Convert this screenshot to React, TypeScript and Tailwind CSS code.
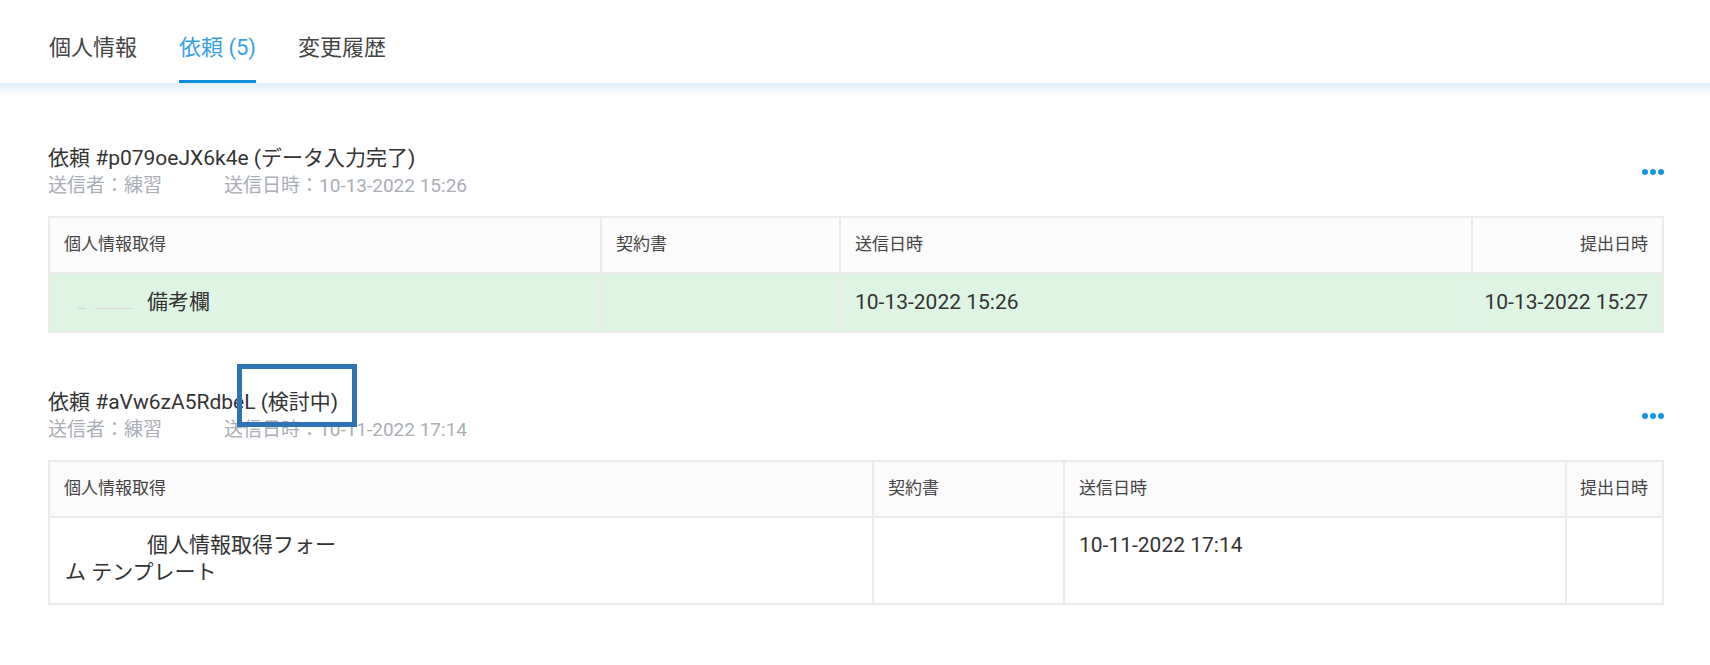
import React from "react";

type Row = {
  title: string;
  sender: string;
  sentAt: string;
  cols: string;
  rowH: string;
  rowBg: string;
  rowAlign: string;
  form: React.ReactNode;
  sent: string;
  submitted: string;
};

const font = "font-['Roboto','Noto_Sans_CJK_JP',sans-serif]";

function Dots() {
  return (
    <div className="flex gap-[2px]">
      <span className="h-[6px] w-[6px] rounded-full bg-[#1296e0]" />
      <span className="h-[6px] w-[6px] rounded-full bg-[#1296e0]" />
      <span className="h-[6px] w-[6px] rounded-full bg-[#1296e0]" />
    </div>
  );
}

function RequestBlock({ r, className }: { r: Row; className?: string }) {
  return (
    <div className={className}>
      <div className="flex items-center justify-between">
        <div className="leading-[27px]">
          <div className="text-[21px] text-[#333]">{r.title}</div>
          <div className="flex text-[19px] text-[#a9aeb6]">
            <span>送信者：{r.sender}</span>
            <span className="ml-[62px]">送信日時：{r.sentAt}</span>
          </div>
        </div>
        <Dots />
      </div>

      {/* table */}
      <div className={`mt-[17px] grid gap-[2px] bg-[#ebebeb] p-[2px] ${r.cols}`}>
        <div className="flex h-[54px] items-center bg-[#fbfbfb] pl-[14px] text-[17px] text-[#444]">個人情報取得</div>
        <div className="flex h-[54px] items-center bg-[#fbfbfb] pl-[14px] text-[17px] text-[#444]">契約書</div>
        <div className="flex h-[54px] items-center bg-[#fbfbfb] pl-[14px] text-[17px] text-[#444]">送信日時</div>
        <div className="flex h-[54px] items-center justify-end bg-[#fbfbfb] pr-[14px] text-[17px] text-[#444]">提出日時</div>

        <div className={`flex pl-[15px] text-[21px] leading-[27px] text-[#333] ${r.rowH} ${r.rowBg} ${r.rowAlign}`}>{r.form}</div>
        <div className={`${r.rowH} ${r.rowBg}`} />
        <div className={`flex pl-[14px] text-[21px] leading-[27px] text-[#333] ${r.rowH} ${r.rowBg} ${r.rowAlign}`}>{r.sent}</div>
        <div className={`flex justify-end pr-[14px] text-[21px] leading-[27px] text-[#333] ${r.rowH} ${r.rowBg} ${r.rowAlign}`}>{r.submitted}</div>
      </div>
    </div>
  );
}

const rows: Row[] = [
  {
    title: "依頼 #p079oeJX6k4e (データ入力完了)",
    sender: "練習",
    sentAt: "10-13-2022 15:26",
    cols: "grid-cols-[550px_237px_630px_1fr]",
    rowH: "h-[57px]",
    rowBg: "bg-[#dff5e3]",
    rowAlign: "items-center",
    form: (
      <div>
        <span className="inline-flex w-[82px] gap-[9px] pl-[13px]">
          <span className="h-px w-[8px] bg-[#d6d6d6]" />
          <span className="h-px w-[37px] bg-[#d6d6d6]" />
        </span>
        備考欄
      </div>
    ),
    sent: "10-13-2022 15:26",
    submitted: "10-13-2022 15:27",
  },
  {
    title: "依頼 #aVw6zA5RdbeL (検討中)",
    sender: "練習",
    sentAt: "10-11-2022 17:14",
    cols: "grid-cols-[822px_189px_500px_1fr]",
    rowH: "h-[85px]",
    rowBg: "bg-white",
    rowAlign: "items-start pt-[14px]",
    form: (
      <div className="w-[282px]">
        <span className="inline-block w-[82px]" />
        個人情報取得フォーム テンプレート
      </div>
    ),
    sent: "10-11-2022 17:14",
    submitted: "",
  },
];

export default function App() {
  return (
    <div className={`relative min-h-screen bg-white ${font}`}>
      {/* tabs */}
      <div className="flex h-[83px] gap-[42px] bg-white pl-[49px] text-[22px]">
        <div className="flex items-center border-b-[3px] border-transparent pt-[14px] text-[#444]">個人情報</div>
        <div className="flex items-center border-b-[3px] border-[#0b8fdd] pt-[14px] text-[#35a2e2]">依頼 (5)</div>
        <div className="flex items-center border-b-[3px] border-transparent pt-[14px] text-[#444]">変更履歴</div>
      </div>
      <div className="h-[14px] bg-linear-to-b from-[#e1eff9] to-white" />

      <div className="pl-[48px] pr-[46px] pt-[48px]">
        <RequestBlock r={rows[0]} />
        <RequestBlock r={rows[1]} className="mt-[56px]" />
      </div>

      {/* annotation box */}
      <div className="absolute left-[237px] top-[364px] h-[63px] w-[120px] border-[5px] border-[#2e74b5]" />
    </div>
  );
}
